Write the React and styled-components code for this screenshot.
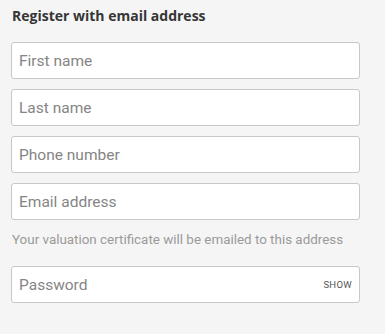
import React from "react";
import styled, { createGlobalStyle } from "styled-components";

const Global = createGlobalStyle`
  html, body { margin: 0; padding: 0; background: #f5f5f5; }
  body { font-family: Roboto, "Liberation Sans", sans-serif; }
`;

const Page = styled.div`
  width: 385px;
  height: 334px;
  box-sizing: border-box;
  padding: 6px 25px 0 11px;
  background: #f5f5f5;
`;

const Heading = styled.h2`
  margin: 0 0 16px 1px;
  font-family: "Open Sans", sans-serif;
  font-weight: 700;
  font-size: 14px;
  line-height: 20px;
  color: #363636;
`;

const Fields = styled.div`
  display: flex;
  flex-direction: column;
  gap: 10px;
`;

const Box = styled.div`
  display: flex;
  align-items: center;
  height: 37px;
  box-sizing: border-box;
  border: 1px solid #c8c8c8;
  border-radius: 3px;
  background: #fff;
  padding: 0 7px;
  margin-top: ${(p) => p.$mt || 0}px;
`;

const Input = styled.input`
  flex: 1;
  min-width: 0;
  border: none;
  outline: none;
  background: transparent;
  font-family: Roboto, sans-serif;
  font-size: 15.5px;
  color: #333;
  padding: 0;
  &::placeholder { color: #858585; }
`;

const Show = styled.button`
  border: none;
  background: transparent;
  font-family: Roboto, sans-serif;
  font-size: 9.5px;
  letter-spacing: 0.3px;
  color: #555;
  padding: 0;
  cursor: pointer;
`;

const Hint = styled.p`
  margin: 0 0 0 1px;
  font-family: Roboto, sans-serif;
  font-size: 13.4px;
  line-height: 20px;
  color: #9a9a9a;
`;

export default function App() {
  return (
    <>
      <Global />
      <Page>
        <Heading>Register with email address</Heading>
        <Fields>
          <Box><Input placeholder="First name" /></Box>
          <Box><Input placeholder="Last name" /></Box>
          <Box><Input placeholder="Phone number" /></Box>
          <Box><Input placeholder="Email address" /></Box>
          <Hint>Your valuation certificate will be emailed to this address</Hint>
          <Box $mt={6}>
            <Input type="password" placeholder="Password" />
            <Show type="button">SHOW</Show>
          </Box>
        </Fields>
      </Page>
    </>
  );
}
